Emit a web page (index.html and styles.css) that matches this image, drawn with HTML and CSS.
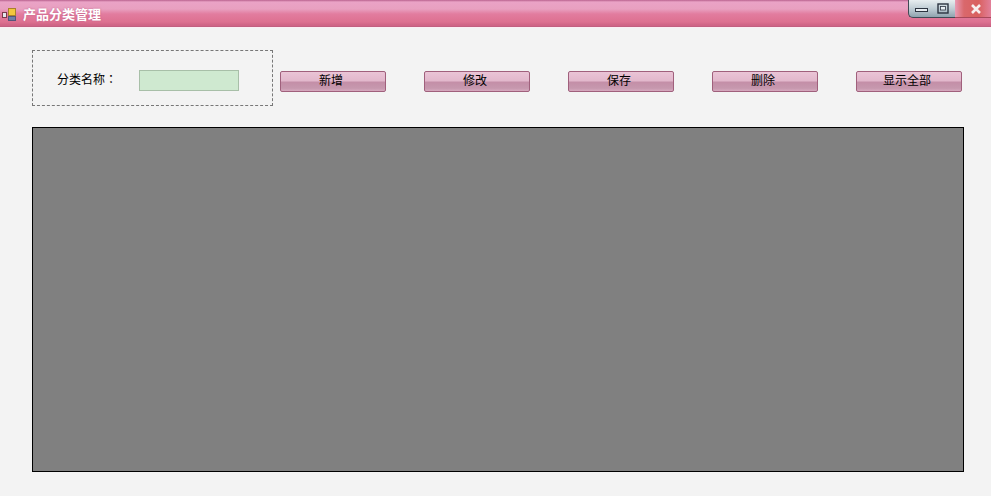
FILE: index.html
```html
<!DOCTYPE html>
<html lang="zh-CN">
<head>
    <meta charset="UTF-8">
    <title>产品分类管理</title>
    <link rel="stylesheet" href="styles.css">
</head>
<body>

<div class="titlebar">
    <svg class="app-icon" width="16" height="16" viewBox="0 0 16 16">
        <rect x="1.5" y="6.5" width="4" height="5" fill="#e4e8ee" stroke="#7a3a4a"/>
        <rect x="7.5" y="2.5" width="7" height="7" fill="#f3c63c" stroke="#a9812c"/>
        <rect x="7.5" y="10.5" width="7" height="4" fill="#6d7fa8" stroke="#55557a"/>
    </svg>
    <span class="title-text">产品分类管理</span>
    <div class="window-buttons">
        <div class="win-btn win-min">
            <svg width="14" height="8" viewBox="0 0 14 8"><rect x="1.5" y="3.5" width="12" height="3" fill="#e8eef2" stroke="#2c3440"/></svg>
        </div>
        <div class="win-btn win-max">
            <svg width="12" height="11" viewBox="0 0 12 11"><rect x="1" y="1" width="10" height="9" fill="none" stroke="#2c3440" stroke-width="1.4"/><rect x="3.5" y="3.5" width="5" height="3.5" fill="#e8eef2" stroke="#2c3440" stroke-width="0.8"/></svg>
        </div>
        <div class="win-btn win-close">
            <svg width="12" height="10" viewBox="0 0 12 10"><path d="M2 1 L10 9 M10 1 L2 9" stroke="#f7eeee" stroke-width="2.6"/></svg>
        </div>
    </div>
</div>

<div class="content">
    <div class="toolbar">
        <div class="search-box">
            <span class="search-label">分类名称<span class="label-colon" lang="zh-TW">：</span></span>
            <input class="search-input" type="text">
        </div>
        <div class="button-group">
            <button class="action-button">新增</button>
            <button class="action-button">修改</button>
            <button class="action-button">保存</button>
            <button class="action-button">删除</button>
            <button class="action-button">显示全部</button>
        </div>
    </div>
    <div class="data-grid"></div>
</div>

</body>
</html>
```

FILE: styles.css
```css
html, body {
    margin: 0;
    height: 100%;
}
body {
    font-family: "Noto Sans CJK SC", "Liberation Sans", sans-serif;
    font-size: 12px;
    background-color: #f3f3f3;
    color: #000;
    overflow: hidden;
}
.titlebar {
    display: flex;
    align-items: center;
    height: 26px;
    padding-left: 1px;
    background: linear-gradient(to bottom, #b9628f 0, #eaa3c6 2px, #e8a0c0 9px, #e27c9f 14px, #dd7090 22px, #cf6486 25px);
    border-bottom: 1px solid #c25f80;
    box-shadow: 0 1px 0 #fbeef4;
    position: relative;
}
.app-icon {
    flex: none;
    margin-top: 2px;
}
.title-text {
    margin-left: 6px;
    font-size: 13px;
    font-weight: 700;
    color: #fff;
    text-shadow: 0 0 2px #c0608a;
    margin-top: 1px;
}
.window-buttons {
    position: absolute;
    top: 0;
    right: 0;
    display: flex;
    height: 18px;
    width: 83px;
}
.win-btn {
    display: flex;
    align-items: center;
    justify-content: center;
    box-sizing: border-box;
    height: 100%;
}
.win-min {
    width: 26px;
    padding-right: 1px;
    border-left: 1px solid #3f4a55;
    border-bottom: 1px solid #3f4a55;
    border-bottom-left-radius: 5px;
    background: linear-gradient(to bottom, #e8eef0, #bccad2 55%, #8fa3ae);
}
.win-max {
    width: 21px;
    padding-right: 4px;
    border-bottom: 1px solid #3f4a55;
    background: linear-gradient(to bottom, #e8eef0, #bccad2 55%, #8fa3ae);
}
.win-close {
    flex: 1;
    padding-left: 6px;
    border-bottom: 1px solid #a8485a;
    background: linear-gradient(to right, #e89ab4, #d9686c 25%, #d9605f 65%, #e2809a);
}
.content {
    padding: 23px 27px 0 32px;
}
.toolbar {
    display: flex;
    align-items: center;
}
.search-box {
    display: flex;
    align-items: center;
    width: 241px;
    height: 56px;
    box-sizing: border-box;
    border: 1px dashed #777;
    padding-left: 24px;
    margin-right: 7px;
}
.search-label {
    width: 82px;
    flex: none;
}
.label-colon {
    font-family: "Noto Sans CJK TC", sans-serif;
}
.search-input {
    width: 100px;
    height: 21px;
    box-sizing: border-box;
    border: 1px solid #a8bfa8;
    background-color: #cfe9d0;
    padding: 0;
    margin-top: 5px;
}
.button-group {
    display: flex;
    gap: 38px;
    margin-top: 7px;
}
.action-button {
    width: 106px;
    height: 21px;
    padding: 0 4px 3px 0;
    font-family: inherit;
    font-size: 12px;
    line-height: 14px;
    color: #000;
    border: 1px solid #a0607c;
    border-radius: 2px;
    background: linear-gradient(to bottom, #eac4d6 0, #e2b8cc 45%, #c48fa8 55%, #c698ae 85%, #d6a8be 100%);
}
.data-grid {
    width: 932px;
    height: 345px;
    box-sizing: border-box;
    margin-top: 21px;
    background-color: #808080;
    border: 1px solid #000;
}
```
